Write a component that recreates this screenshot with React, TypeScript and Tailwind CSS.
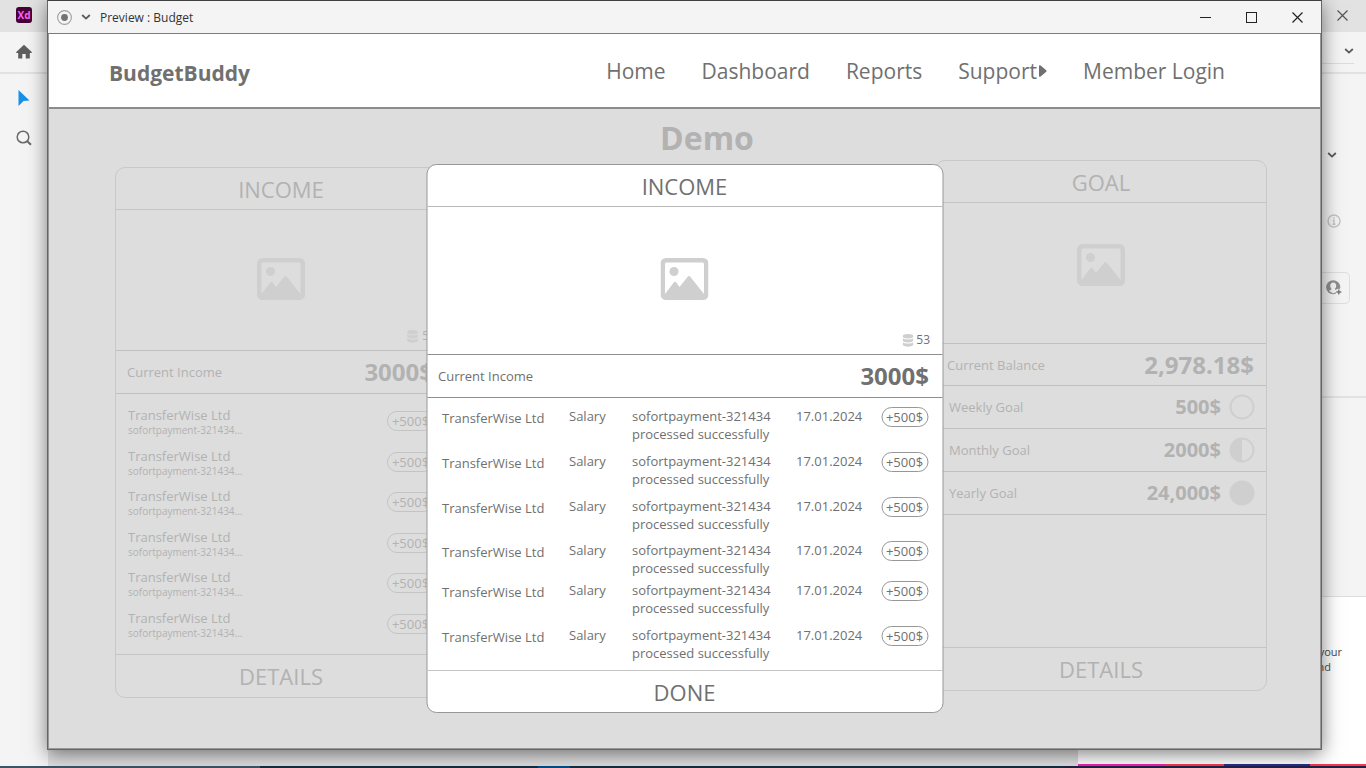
import React from "react";

const transfers = [
  { id: 1, row: "h-[45px]" },
  { id: 2, row: "h-[45px]" },
  { id: 3, row: "h-11" },
  { id: 4, row: "h-10" },
  { id: 5, row: "h-[45px]" },
  { id: 6, row: "h-[45px]" },
];

function ImageIcon() {
  return (
    <svg viewBox="0 0 48 42" className="h-[42px] w-12" aria-hidden="true">
      <path
        fill="#cfcfcf"
        fillRule="evenodd"
        d="M5.5 0h37A5.5 5.5 0 0 1 48 5.5v31a5.5 5.5 0 0 1-5.500 5.500h-37A5.500 5.500 0 0 1 0 36.500v-31A5.500 5.500 0 0 1 5.500 0ZM6 4.500A1.500 1.500 0 0 0 4.500 6v30L13.200 24.500q1.300-1.300 2.600 0L19 29l8.200-10.300q1.300-1.400 2.600 0L43.500 36V6A1.500 1.500 0 0 0 42 4.500Z"
      />
      <circle cx="13.500" cy="13.500" r="4.500" fill="#cfcfcf" />
    </svg>
  );
}

function CoinsIcon() {
  return (
    <svg viewBox="0 0 11 13" className="h-[13px] w-[11px]" fill="#cfcfcf" aria-hidden="true">
      <ellipse cx="5.500" cy="2.300" rx="5.300" ry="2.200" />
      <path d="M.2 4.200C2 5.800 9 5.800 10.800 4.200v2.300c0 2.500-10.600 2.500-10.600 0Z" />
      <path d="M.2 8.300c1.800 1.600 8.800 1.600 10.600 0v2.300c0 2.800-10.600 2.800-10.600 0Z" />
    </svg>
  );
}

function Chevron() {
  return (
    <svg viewBox="0 0 10 6" className="h-1.5 w-2.5" fill="none" stroke="#5a5a5a" strokeWidth="1.800" aria-hidden="true">
      <path d="m1.200 1 3.800 3.600L8.800 1" />
    </svg>
  );
}

function CloseIcon({ color }: { color: string }) {
  return (
    <svg viewBox="0 0 11 11" className="size-[11px]" stroke={color} strokeWidth="1.200" aria-hidden="true">
      <path d="m.5.5 10 10m0-10-10 10" />
    </svg>
  );
}

function Pill({ className }: { className: string }) {
  return (
    <span className={`flex h-5 w-[47px] items-center justify-center rounded-full border text-[13px] leading-4 ${className}`}>
      +500$
    </span>
  );
}

function Backdrop() {
  return (
    <div className="flex h-full flex-col">
      <div className="flex h-8 shrink-0 items-start justify-between bg-[#e2e2e2] pl-4 pr-[18px]">
        <span className="mt-[7px] flex size-4 items-center justify-center rounded-[3px] bg-[#470137] text-[10px] font-bold leading-none text-[#ff61f6]">
          Xd
        </span>
        <button type="button" aria-label="Close application" className="mt-2.5">
          <CloseIcon color="#555555" />
        </button>
      </div>
      <div className="flex h-[42px] shrink-0 items-start justify-between border-b-2 border-[#e2e2e2] pl-4">
        <button type="button" aria-label="Home" className="mt-3">
          <svg viewBox="0 0 16 16" className="size-4" fill="#5e5e5e" aria-hidden="true">
            <path d="M8 .8 16 8.200 15.400 9H13.800v5.600H9.700V10H6.300v4.600H2.200V9H.6L0 8.200Z" />
          </svg>
        </button>
        <div className="mr-3 flex h-8 w-11 items-center justify-end border-b border-[#dcdcdc] pt-1.5">
          <Chevron />
        </div>
      </div>
      <div className="flex min-h-0 flex-1">
        <div className="flex w-12 shrink-0 flex-col items-center pt-4">
          <button type="button" aria-label="Select">
            <svg viewBox="0 0 12 16" className="h-4 w-3" fill="#1592e6" aria-hidden="true">
              <path d="M.5 0 11.500 10.500l-6 .4-5 5Z" />
            </svg>
          </button>
          <button type="button" aria-label="Search" className="mt-6">
            <svg viewBox="0 0 16 16" className="size-4" fill="none" stroke="#6a6a6a" strokeWidth="1.500" aria-hidden="true">
              <circle cx="7" cy="7" r="5.800" />
              <path d="m11.200 11.200 3.800 3.600" strokeWidth="2" />
            </svg>
          </button>
        </div>
        <div className="flex-1 bg-[#dfdfdf]" />
        <div className="flex w-72 shrink-0 flex-col">
          <div className="flex h-[324px] shrink-0 flex-col items-end border-b-2 border-[#e2e2e2] pt-[78px]">
            <div className="mr-[29px]">
              <Chevron />
            </div>
            <svg viewBox="0 0 14 14" className="mr-[25px] mt-[56px] size-3.5" fill="none" stroke="#c4c4c4" strokeWidth="1.400" aria-hidden="true">
              <circle cx="7" cy="7" r="6" />
              <path d="M7 3.300v1.500M5.700 6.300H7v3.900M5.500 10.200h3" />
            </svg>
            <button
              type="button"
              aria-label="Invite"
              className="mr-4 mt-11 flex h-8 w-12 items-center justify-end rounded-[5px] border border-[#dedede] pr-[7px]"
            >
              <svg viewBox="0 0 16 16" className="size-4" aria-hidden="true">
                <circle cx="7.200" cy="7.200" r="7" fill="#8f8f8f" />
                <path d="M7.200 2.400c2 0 3 1.500 3 3.400 0 1.200-.6 2.300-1.300 3 .1 1 1.300 1.300 2.500 2.100L7.200 13.600l-4.200-2.700c1.200-.8 2.400-1.100 2.500-2.100-.7-.7-1.300-1.800-1.300-3 0-1.900 1-3.400 3-3.400Z" fill="#f4f4f4" />
                <circle cx="12.800" cy="12" r="3.300" fill="#f4f4f4" />
                <path d="M12.800 9.500v5M10.300 12h5" stroke="#777777" strokeWidth="1.400" />
              </svg>
            </button>
          </div>
          <div className="h-[199px] shrink-0 border-b border-[#dedede]" />
          <div className="flex min-h-0 flex-1 flex-col justify-between bg-white">
            <p className="self-end pr-6 pt-[47px] text-right text-[11px] leading-[15px] text-[#4b4b4b]">
              on your
              <br />
              <span className="pr-[11px]">and</span>
            </p>
            <div className="flex h-0.5">
              <span className="w-[88px] bg-[#ee22b0]" />
              <span className="w-[58px] bg-[#f53a4c]" />
              <span className="w-[86px] bg-[#24308a]" />
              <span className="flex-1 bg-[#f53a4c]" />
            </div>
          </div>
        </div>
      </div>
      <div className="flex h-0.5 shrink-0 bg-[#142c42]">
        <span className="w-[260px] bg-[#3a5468]" />
        <span className="w-[278px]" />
        <span className="w-8 bg-[#064c86]" />
        <span className="flex-1" />
        <span className="w-[300px] bg-[#251f45]" />
      </div>
    </div>
  );
}

function TitleBar() {
  return (
    <div className="flex h-[33px] shrink-0 items-center justify-between border-b border-[#7c7c7c] bg-[#f4f4f4] pl-2 pr-[18px]">
      <div className="flex items-center gap-[9px]">
        <button type="button" aria-label="Record preview">
          <svg viewBox="0 0 16 16" className="size-4" aria-hidden="true">
            <circle cx="8.500" cy="8.500" r="6.900" fill="none" stroke="#a0a0a0" strokeWidth="1.100" />
            <circle cx="8.500" cy="8.500" r="3.400" fill="#737373" />
          </svg>
        </button>
        <button type="button" aria-label="Preview options">
          <Chevron />
        </button>
        <span className="pt-0.5 text-[12px] leading-4 text-[#333333]">Preview : Budget</span>
      </div>
      <div className="flex items-center gap-[35px] text-[#222222]">
        <button type="button" aria-label="Minimize" className="flex size-[11px] items-center">
          <span className="h-px w-full bg-[#222222]" />
        </button>
        <button type="button" aria-label="Maximize" className="size-[11px] border border-[#222222]" />
        <button type="button" aria-label="Close preview">
          <CloseIcon color="#222222" />
        </button>
      </div>
    </div>
  );
}

function SiteHeader() {
  return (
    <header className="flex h-[75px] shrink-0 items-center justify-between border-b-2 border-[#8c8c8c] bg-white pl-[60px] pr-[95px] text-[#707070]">
      <a href="#home" className="pt-1 text-[21px] font-bold leading-8">
        BudgetBuddy
      </a>
      <nav className="flex items-center gap-9 text-[21px] leading-8">
        <a href="#home">Home</a>
        <a href="#dashboard">Dashboard</a>
        <a href="#reports">Reports</a>
        <a href="#support" className="flex items-center gap-0.5">
          Support
          <svg viewBox="0 0 8 12" className="h-3 w-2" fill="#707070" aria-hidden="true">
            <path d="M0 .8Q.5-.2 1.600.6L7.200 5.200Q8 6 7.200 6.800L1.600 11.400Q.5 12.200 0 11.200Z" />
          </svg>
        </a>
        <a href="#login">Member Login</a>
      </nav>
    </header>
  );
}

function IncomeCard() {
  return (
    <section className="mt-[7px] w-[332px] rounded-[10px] border border-[#c8c8c8]">
      <h2 className="flex h-[42px] items-center justify-center border-b border-[#c4c4c4] text-[22px] leading-8">INCOME</h2>
      <div className="flex h-[140px] flex-col items-center">
        <div className="pt-12">
          <ImageIcon />
        </div>
        <p className="mt-7 flex items-center gap-1 self-end pr-2.5 text-[12px] leading-4">
          <CoinsIcon />
          53
        </p>
      </div>
      <div className="flex h-11 items-center justify-between border-y border-[#c0c0c0] pl-[11px] pr-[13px]">
        <span className="text-[13px] leading-5">Current Income</span>
        <strong className="text-[24px] leading-8">3000$</strong>
      </div>
      <ul className="grid h-[260px] auto-rows-fr pb-2.5 pl-3 pr-3 pt-[7px]">
        {transfers.map((t) => (
          <li key={t.id} className="flex items-center justify-between">
            <div>
              <p className="text-[13px] leading-[18px]">TransferWise Ltd</p>
              <p className="text-[10px] leading-3">sofortpayment-321434...</p>
            </div>
            <Pill className="border-[#c4c4c4]" />
          </li>
        ))}
      </ul>
      <button type="button" className="h-[43px] w-full border-t border-[#c4c4c4] text-[22px] leading-8">
        DETAILS
      </button>
    </section>
  );
}

function ProgressDot({ kind }: { kind: "empty" | "half" | "full" }) {
  return (
    <svg viewBox="0 0 26 26" className="size-[26px]" aria-hidden="true">
      <circle cx="13" cy="13" r={kind === "full" ? 12.5 : 11.5} fill={kind === "full" ? "#cfcfcf" : "none"} stroke={kind === "full" ? "none" : "#cfcfcf"} strokeWidth="2" />
      {kind === "half" && <path d="M13 1a12 12 0 0 0 0 24Z" fill="#cfcfcf" />}
    </svg>
  );
}

const goals: { label: string; value: string; kind: "empty" | "half" | "full" }[] = [
  { label: "Weekly Goal", value: "500$", kind: "empty" },
  { label: "Monthly Goal", value: "2000$", kind: "half" },
  { label: "Yearly Goal", value: "24,000$", kind: "full" },
];

function GoalCard() {
  return (
    <section className="w-[332px] rounded-[10px] border border-[#c8c8c8]">
      <h2 className="flex h-[42px] items-center justify-center border-b border-[#c4c4c4] text-[22px] leading-8">GOAL</h2>
      <div className="flex h-[140px] justify-center pt-[41px]">
        <ImageIcon />
      </div>
      <div className="flex h-[43px] items-center justify-between border-y border-[#c0c0c0] pl-[11px] pr-3">
        <span className="text-[13px] leading-5">Current Balance</span>
        <strong className="text-[24px] leading-8">2,978.18$</strong>
      </div>
      {goals.map((g) => (
        <div key={g.label} className="flex h-[43px] items-center border-b border-[#c0c0c0] pl-[13px] pr-[11px]">
          <span className="flex-1 text-[13px] leading-5">{g.label}</span>
          <strong className="mr-2 text-[20px] leading-7">{g.value}</strong>
          <ProgressDot kind={g.kind} />
        </div>
      ))}
      <div className="h-[132px]" />
      <button type="button" className="h-[43px] w-full border-t border-[#c4c4c4] text-[22px] leading-8">
        DETAILS
      </button>
    </section>
  );
}

function IncomeDialog() {
  return (
    <section
      role="dialog"
      aria-label="Income"
      className="absolute left-1/2 top-[55px] w-[517px] -translate-x-1/2 rounded-[10px] border border-[#979797] bg-white text-[#707070]"
    >
      <h2 className="flex h-[42px] items-center justify-center border-b border-[#b8b8b8] text-[22px] leading-8">INCOME</h2>
      <div className="flex h-[147px] flex-col items-center">
        <div className="pt-[51px]">
          <ImageIcon />
        </div>
        <p className="mt-8 flex items-center gap-[3px] self-end pr-3 text-[12px] leading-4">
          <CoinsIcon />
          53
        </p>
      </div>
      <div className="flex h-11 items-center justify-between border-y border-[#8f8f8f] pl-[11px] pr-[13px]">
        <span className="text-[13px] leading-5">Current Income</span>
        <strong className="text-[24px] leading-8">3000$</strong>
      </div>
      <div className="h-[272px] pt-[9px]">
        <table className="w-full table-fixed border-collapse text-left text-[13px] leading-[18px]">
          <colgroup>
            <col className="w-[142px]" />
            <col className="w-[63px]" />
            <col className="w-[164px]" />
            <col className="w-[85px]" />
            <col />
          </colgroup>
          <tbody>
            {transfers.map((t) => (
              <tr key={t.id} className={`${t.row} align-top`}>
                <td className="pl-[15px] pt-0.5">TransferWise Ltd</td>
                <td>Salary</td>
                <td>
                  sofortpayment-321434
                  <br />
                  processed successfully
                </td>
                <td>17.01.2024</td>
                <td>
                  <Pill className="border-[#979797]" />
                </td>
              </tr>
            ))}
          </tbody>
        </table>
      </div>
      <button type="button" className="h-[42px] w-full border-t border-[#c4c4c4] text-[22px] leading-8">
        DONE
      </button>
    </section>
  );
}

export default function App() {
  return (
    <div className="relative h-screen overflow-hidden bg-[#f4f4f4] font-['Open_Sans','Noto_Sans',sans-serif]">
      <Backdrop />
      <div className="absolute bottom-[18px] left-[47px] right-11 top-0 flex flex-col border border-[#666666] border-t-[#404040] bg-[#dddddd] shadow-[0_4px_18px_rgba(0,0,0,0.5)]">
        <TitleBar />
        <div className="flex min-h-0 flex-1 flex-col border-x border-b border-[#979797]">
          <SiteHeader />
          <main className="relative flex-1 pl-[66px] pr-[53px] text-[#b2b2b2]">
            <h1 className="h-[51px] pl-8 pt-[9px] text-center text-[32px] font-bold leading-10">Demo</h1>
            <div className="flex items-start justify-between">
              <IncomeCard />
              <GoalCard />
            </div>
            <IncomeDialog />
          </main>
        </div>
      </div>
    </div>
  );
}
